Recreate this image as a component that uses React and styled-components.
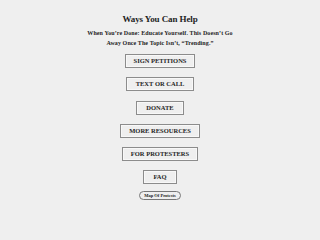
import React from "react";
import styled, { createGlobalStyle } from "styled-components";

const Global = createGlobalStyle`
  html, body {
    margin: 0;
    padding: 0;
    background: #efefef;
  }
`;

const Page = styled.section`
  display: flex;
  flex-direction: column;
  align-items: center;
  padding-top: 13px;
  font-family: "Liberation Serif", "Times New Roman", serif;
  color: #1e1e1e;
`;

const Title = styled.h1`
  margin: 0;
  font-size: 9px;
  font-weight: 700;
  line-height: 12px;
  letter-spacing: -0.1px;
`;

const Lead = styled.p`
  margin: 4px 0 0;
  width: 160px;
  text-align: center;
  font-size: 6px;
  font-weight: 700;
  line-height: 9.5px;
  letter-spacing: 0.1px;
`;

const Links = styled.nav`
  display: flex;
  flex-direction: column;
  align-items: center;
  gap: 9.3px;
  margin-top: 6px;
`;

const LinkButton = styled.a`
  display: block;
  box-sizing: border-box;
  height: 14px;
  padding: 0 ${(p) => p.$pad || 8}px;
  border: 1px solid #8c8c8c;
  box-shadow: inset 0 0 0 1px #f8f8f8;
  font-size: 6.5px;
  font-weight: 700;
  line-height: 12px;
  letter-spacing: 0;
  text-transform: uppercase;
  color: #262626;
  text-decoration: none;
  cursor: pointer;
`;

const Pill = styled.a`
  display: block;
  margin-top: -3px;
  padding: 0 4px;
  height: 7px;
  border: 1px solid #777;
  border-radius: 5px;
  font-size: 4.5px;
  font-weight: 700;
  line-height: 7px;
  color: #222;
  text-decoration: none;
`;

const links = [
  { label: "Sign Petitions" },
  { label: "Text or Call", pad: 9 },
  { label: "Donate", pad: 9 },
  { label: "More Resources" },
  { label: "For Protesters" },
  { label: "FAQ", pad: 9 },
];

export default function App() {
  return (
    <>
      <Global />
      <Page>
        <Title>Ways You Can Help</Title>
        <Lead>
          When You’re Done: Educate Yourself. This Doesn’t Go Away Once The
          Topic Isn’t, “Trending.”
        </Lead>
        <Links>
          {links.map((l) => (
            <LinkButton key={l.label} $pad={l.pad}>
              {l.label}
            </LinkButton>
          ))}
          <Pill>Map Of Protests</Pill>
        </Links>
      </Page>
    </>
  );
}
